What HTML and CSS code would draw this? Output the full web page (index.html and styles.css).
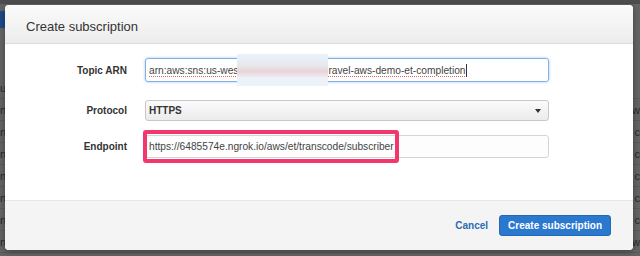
FILE: index.html
```html
<!DOCTYPE html>
<html>
<head>
<meta charset="utf-8">
<link rel="stylesheet" href="styles.css">
</head>
<body>
<div class="backdrop">
  <div class="topbar"></div>
  <div class="bg-btn"></div>
  <div class="bg-rows">
    <div class="bg-row"><span class="l">u</span><span class="r"></span></div>
    <div class="bg-row"><span class="l">n</span><span class="r">w</span></div>
    <div class="bg-row"><span class="l">n</span><span class="r">c</span></div>
    <div class="bg-row"><span class="l">n</span><span class="r">c</span></div>
    <div class="bg-row"><span class="l">n</span><span class="r">c</span></div>
    <div class="bg-row"><span class="l">n</span><span class="r">c</span></div>
    <div class="bg-row"><span class="l">n</span><span class="r">c</span></div>
    <div class="bg-row"><span class="l">n</span><span class="r">w</span></div>
  </div>
</div>

<div class="modal">
  <div class="modal-header">Create subscription</div>
  <div class="modal-body">
    <div class="form-row row-arn">
      <label class="lbl">Topic ARN</label>
      <div class="field focused"><span class="sp">arn:aws:sns:us-wes</span><span class="redact"></span><span class="sp">ravel-aws-demo-et-completion</span><span class="caret"></span></div>
    </div>
    <div class="form-row row-proto">
      <label class="lbl">Protocol</label>
      <div class="select"><span class="sel-text">HTTPS</span><span class="arrow"></span></div>
    </div>
    <div class="form-row row-end">
      <label class="lbl">Endpoint</label>
      <div class="field plain">https://6485574e.ngrok.io/aws/et/transcode/subscriber<span class="highlight"></span></div>
    </div>
  </div>
  <div class="modal-footer">
    <span class="cancel">Cancel</span>
    <span class="btn-primary">Create subscription</span>
  </div>
</div>
</body>
</html>
```

FILE: styles.css
```css
html, body {
  margin: 0;
  padding: 0;
}
body {
  width: 640px;
  height: 256px;
  overflow: hidden;
  background: #646464;
  font-family: "Liberation Sans", Arial, sans-serif;
  position: relative;
}
.backdrop {
  position: absolute;
  inset: 0;
}
.topbar {
  height: 4px;
  background: #4d4d4d;
}
.bg-btn {
  position: absolute;
  left: 0;
  top: 11px;
  width: 5px;
  height: 17px;
  background: #1d4a86;
}
.bg-rows {
  position: absolute;
  left: 0;
  right: 0;
  top: 77px;
  display: flex;
  flex-direction: column;
}
.bg-row {
  height: 21px;
  border-bottom: 1px solid #5a5a5a;
  display: flex;
  justify-content: space-between;
  align-items: center;
  font-size: 11px;
  color: #2a2a2a;
}

.modal {
  position: absolute;
  left: 5px;
  top: 5px;
  width: 628px;
  height: 245px;
  background: #fff;
  border-radius: 4px;
  overflow: hidden;
  display: flex;
  flex-direction: column;
  box-shadow: 0 2px 6px rgba(0,0,0,0.35);
}
.modal-header {
  height: 39px;
  flex: none;
  box-sizing: border-box;
  padding: 4px 0 0 21px;
  display: flex;
  align-items: center;
  font-size: 13px;
  color: #333;
  background: linear-gradient(#fbfbfb, #ececec);
  border-bottom: 1px solid #dadada;
}
.modal-body {
  flex: 1;
  padding-top: 14px;
  box-sizing: border-box;
}
.form-row {
  display: grid;
  grid-template-columns: 122px 404px;
  column-gap: 18px;
  align-items: center;
}
.row-proto { margin-top: 18px; }
.row-end { margin-top: 14px; }
.lbl {
  text-align: right;
  font-weight: bold;
  font-size: 10px;
  color: #333;
}
.field {
  position: relative;
  box-sizing: border-box;
  border-radius: 3px;
  font-size: 10.2px;
  color: #444;
  display: flex;
  align-items: center;
  padding-left: 3px;
  white-space: nowrap;
}
.field.focused {
  height: 24px;
  border: 1px solid #7fb0e6;
  box-shadow: 0 0 3px rgba(102,160,230,0.6);
}
.field.plain {
  height: 23px;
  border: 1px solid #d4d4d4;
  background: #fdfdfd;
}
.sp {
  text-decoration: underline dotted rgba(215,50,50,0.75);
  text-underline-offset: 2px;
}
.redact {
  display: inline-block;
  width: 91px;
  height: 32px;
  margin: -5px 0 -5px -1px;
  background: linear-gradient(#ebf2fa 0%, #e6e8ee 35%, #e8d3d6 55%, #eef2f8 75%, #ebf2fa 100%);
}
.caret {
  display: inline-block;
  width: 1px;
  height: 13px;
  background: #333;
  margin-left: 1px;
}
.select {
  height: 21px;
  box-sizing: border-box;
  border: 1px solid #c8c8c8;
  border-radius: 3px;
  background: linear-gradient(#fbfbfb, #ebebeb);
  display: flex;
  align-items: center;
  justify-content: space-between;
  padding: 0 7px 0 3px;
}
.sel-text {
  font-weight: bold;
  font-size: 10px;
  color: #333;
}
.arrow {
  width: 0;
  height: 0;
  border-left: 3px solid transparent;
  border-right: 3px solid transparent;
  border-top: 4px solid #333;
}
.highlight {
  position: absolute;
  left: -3px;
  top: -6px;
  width: 256px;
  height: 33px;
  box-sizing: border-box;
  border: 4px solid #f2376c;
  border-radius: 3px;
  pointer-events: none;
}
.modal-footer {
  height: 50px;
  flex: none;
  background: #f4f4f4;
  border-top: 1px solid #e6e6e6;
  box-sizing: border-box;
  display: flex;
  align-items: center;
  justify-content: flex-end;
  padding-right: 22px;
  gap: 11px;
}
.cancel {
  font-size: 10px;
  font-weight: bold;
  color: #2b6cb4;
}
.btn-primary {
  height: 21px;
  box-sizing: border-box;
  padding: 0 8px;
  display: flex;
  align-items: center;
  background: #2b78cf;
  border: 1px solid #2468b6;
  border-radius: 3px;
  color: #fff;
  font-size: 10px;
  font-weight: bold;
}
```
